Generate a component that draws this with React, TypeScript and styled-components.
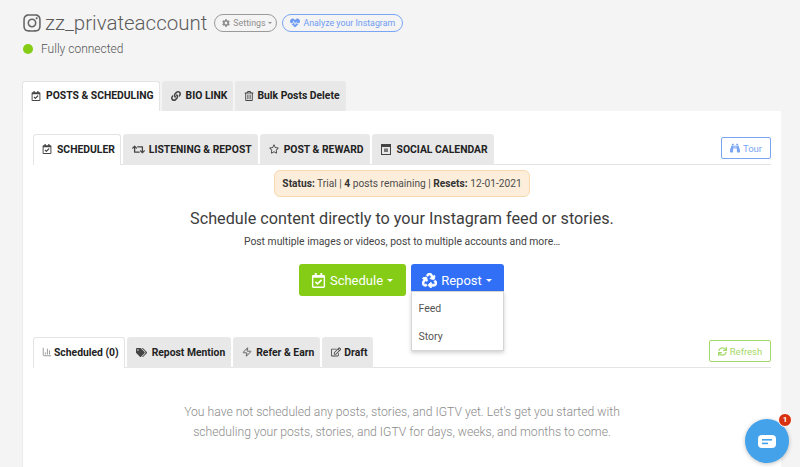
import React from "react";
import styled, { createGlobalStyle } from "styled-components";
import { ChartColumn } from "lucide-react";
import {
  FaBinoculars,
  FaCog,
  FaHeartbeat,
  FaInstagram,
  FaLink,
  FaRecycle,
  FaRegCalendarCheck,
  FaRegEdit,
  FaRegStar,
  FaRegTrashAlt,
  FaRetweet,
  FaSync,
  FaTags,
} from "react-icons/fa";
import { LuZap } from "react-icons/lu";

const GlobalStyle = createGlobalStyle`
  html, body {
    margin: 0;
    height: 467px;
    overflow: hidden;
    background: #f4f4f4;
    font-family: Roboto, "Liberation Sans", sans-serif;
  }
`;

const Page = styled.div`
  height: 467px;
  padding: 11px 19px 0 22px;
  box-sizing: border-box;
  overflow: hidden;
`;

const TitleRow = styled.div`
  display: flex;
  align-items: center;
  height: 24px;
  color: #666;
`;

const Username = styled.span`
  font-size: 20.5px;
  font-weight: 300;
  margin-left: 3px;
  color: #5c5c5c;
`;

const Pill = styled.span<{ $blue?: boolean }>`
  display: inline-flex;
  align-items: center;
  gap: 3px;
  height: 16px;
  padding: ${(p) => (p.$blue ? "0 7px" : "0 4px 0 7px")};
  margin-left: ${(p) => (p.$blue ? "5px" : "7px")};
  border: 1px solid ${(p) => (p.$blue ? "#7aa5f5" : "#9a9a9a")};
  border-radius: 9px;
  font-size: 8.8px;
  color: ${(p) => (p.$blue ? "#6f9cf3" : "#8f8f8f")};
`;

const Caret = styled.span<{ $size?: number }>`
  display: inline-block;
  border-top: ${(p) => p.$size ?? 3}px solid currentColor;
  border-left: ${(p) => p.$size ?? 3}px solid transparent;
  border-right: ${(p) => p.$size ?? 3}px solid transparent;
`;

const StatusRow = styled.div`
  display: flex;
  align-items: center;
  gap: 8px;
  margin: 3px 0 0 1px;
  height: 22px;
  font-size: 12px;
  font-weight: 300;
  color: #555;
`;

const Dot = styled.span`
  width: 10px;
  height: 10px;
  border-radius: 50%;
  background: #84cc16;
`;

const OuterTabs = styled.div`
  display: flex;
  gap: 2px;
  margin-top: 21px;
  height: 30px;
`;

const Tab = styled.div<{ $active?: boolean; $gap?: number; $tall?: boolean }>`
  display: flex;
  align-items: center;
  gap: ${(p) => p.$gap ?? 5}px;
  height: ${(p) => (p.$tall ? 31 : 30)}px;
  padding: 0 5px 2px 8px;
  box-sizing: border-box;
  border: 1px solid ${(p) => (p.$active ? "#e4e4e4" : "#e9e9e9")};
  border-bottom: none;
  border-radius: 3px 3px 0 0;
  background: ${(p) => (p.$active ? "#fff" : "#e8e8e8")};
  font-size: 10.35px;
  font-weight: 700;
  color: #222;
  white-space: nowrap;
  svg {
    font-size: 10px;
    color: #444;
    flex: none;
  }
`;

const Panel = styled.div`
  background: #fff;
  padding: 23px 10px 0 10px;
  height: 400px;
  width: 759px;
  box-sizing: border-box;
  border-left: 1px solid #ececec;
`;

const SubHead = styled.div`
  display: flex;
  align-items: flex-end;
  justify-content: space-between;
  box-sizing: border-box;
  border-bottom: 1px solid #e4e4e4;
  height: 31px;
`;

const InnerTabs = styled.div`
  display: flex;
  gap: 2px;
  margin-bottom: -1px;
`;

const GhostButton = styled.div<{ $color: string; $w: number }>`
  display: flex;
  align-items: center;
  justify-content: center;
  gap: 3px;
  width: ${(p) => p.$w}px;
  height: 22px;
  margin-bottom: 5px;
  box-sizing: border-box;
  border: 1px solid ${(p) => p.$color};
  border-radius: 2px;
  font-size: 9.5px;
  color: ${(p) => p.$color};
`;

const Notice = styled.div`
  width: max-content;
  margin: 5px auto 0;
  height: 27px;
  padding: 0 7px;
  box-sizing: border-box;
  display: flex;
  align-items: center;
  white-space: pre;
  background: #fdeedb;
  border: 1px solid #f6d9ae;
  border-radius: 6px;
  font-size: 10.2px;
  color: #4c4c4c;
  b {
    font-weight: 700;
    color: #333;
  }
`;

const Headline = styled.h2`
  margin: 12px 0 0;
  text-align: center;
  font-size: 16.2px;
  line-height: 20px;
  font-weight: 400;
  color: #3d3d3d;
`;

const Sub = styled.p`
  margin: 6px 0 0;
  text-align: center;
  font-size: 10.35px;
  line-height: 14px;
  color: #444;
`;

const Actions = styled.div`
  display: flex;
  justify-content: center;
  gap: 5px;
  margin-top: 15px;
  padding-right: 2px;
  height: 32px;
`;

const ActionWrap = styled.div`
  position: relative;
`;

const ActionButton = styled.div<{ $bg: string; $w: number }>`
  display: flex;
  align-items: center;
  justify-content: center;
  gap: 4px;
  width: ${(p) => p.$w}px;
  height: 32px;
  background: ${(p) => p.$bg};
  border-radius: 3px;
  color: #fff;
  font-size: 13px;
  svg {
    font-size: 15px;
  }
`;

const Menu = styled.div`
  position: absolute;
  top: 27px;
  left: 0;
  width: 93px;
  height: 60px;
  box-sizing: border-box;
  padding-top: 3px;
  background: #fff;
  border: 1px solid #d5d5d5;
  box-shadow: 0 2px 4px rgba(0, 0, 0, 0.18);
  z-index: 2;
`;

const MenuItem = styled.div`
  height: 28px;
  line-height: 28px;
  padding-left: 7px;
  font-size: 10.5px;
  color: #555;
`;

const LowerHead = styled(SubHead)`
  margin-top: 41px;
`;

const Empty = styled.p`
  margin: 34px auto 0;
  width: 480px;
  text-align: center;
  font-size: 12.2px;
  line-height: 20px;
  font-weight: 300;
  color: #8b8b8b;
`;

const ChatBubble = styled.div`
  position: absolute;
  left: 745px;
  top: 419px;
  width: 44px;
  height: 44px;
  border-radius: 50%;
  background: #44a2ea;
  display: flex;
  align-items: center;
  justify-content: center;
  box-shadow: 0 1px 4px rgba(0, 0, 0, 0.25);
`;

const Badge = styled.span`
  position: absolute;
  top: -6px;
  right: -3px;
  width: 12px;
  height: 12px;
  border-radius: 50%;
  border: 1px solid #fff;
  background: #d9300f;
  color: #fff;
  font-size: 8px;
  font-weight: 700;
  line-height: 12px;
  text-align: center;
`;

const CalendarBox = () => (
  <svg width="10" height="11" viewBox="0 0 10 11" fill="none" stroke="#444">
    <rect x="0.5" y="0.5" width="9" height="10" />
    <rect x="0.5" y="0.5" width="9" height="2" fill="#444" />
    <rect x="3" y="4.5" width="4" height="3.5" fill="#777" stroke="none" />
  </svg>
);

export default function App() {
  return (
    <Page>
      <GlobalStyle />
      <TitleRow>
        <FaInstagram size={20} />
        <Username>zz_privateaccount</Username>
        <Pill>
          <FaCog size={8} /> Settings <Caret $size={2.5} />
        </Pill>
        <Pill $blue>
          <FaHeartbeat size={10} /> Analyze your Instagram
        </Pill>
      </TitleRow>
      <StatusRow>
        <Dot /> Fully connected
      </StatusRow>

      <OuterTabs>
        <Tab $active>
          <FaRegCalendarCheck /> POSTS &amp; SCHEDULING
        </Tab>
        <Tab>
          <FaLink /> BIO LINK
        </Tab>
        <Tab $gap={3}>
          <FaRegTrashAlt /> Bulk Posts Delete
        </Tab>
      </OuterTabs>

      <Panel>
        <SubHead>
          <InnerTabs>
            <Tab $active $tall>
              <FaRegCalendarCheck /> SCHEDULER
            </Tab>
            <Tab $tall $gap={4}>
              <FaRetweet size={13} /> LISTENING &amp; REPOST
            </Tab>
            <Tab $tall>
              <FaRegStar /> POST &amp; REWARD
            </Tab>
            <Tab $tall $gap={6}>
              <CalendarBox /> SOCIAL CALENDAR
            </Tab>
          </InnerTabs>
          <GhostButton $color="#7aa5f5" $w={50}>
            <FaBinoculars size={10} /> Tour
          </GhostButton>
        </SubHead>

        <Notice>
          <b>Status:</b> Trial | <b>4</b> posts remaining | <b>Resets:</b> 12-01-2021
        </Notice>

        <Headline>Schedule content directly to your Instagram feed or stories.</Headline>
        <Sub>Post multiple images or videos, post to multiple accounts and more…</Sub>

        <Actions>
          <ActionButton $bg="#84cc16" $w={107}>
            <FaRegCalendarCheck /> Schedule <Caret />
          </ActionButton>
          <ActionWrap>
            <ActionButton $bg="#316ff6" $w={93}>
              <FaRecycle stroke="currentColor" strokeWidth={30} /> Repost <Caret />
            </ActionButton>
            <Menu>
              <MenuItem>Feed</MenuItem>
              <MenuItem>Story</MenuItem>
            </Menu>
          </ActionWrap>
        </Actions>

        <LowerHead>
          <InnerTabs>
            <Tab $active $tall $gap={2}>
              <ChartColumn size={10} color="#888" /> Scheduled (0)
            </Tab>
            <Tab $tall $gap={5}>
              <FaTags size={11} /> Repost Mention
            </Tab>
            <Tab $tall $gap={4}>
              <LuZap /> Refer &amp; Earn
            </Tab>
            <Tab $tall $gap={3}>
              <FaRegEdit /> Draft
            </Tab>
          </InnerTabs>
          <GhostButton $color="#a5d86a" $w={62}>
            <FaSync size={9} /> Refresh
          </GhostButton>
        </LowerHead>

        <Empty>
          You have not scheduled any posts, stories, and IGTV yet. Let's get you started with
          scheduling your posts, stories, and IGTV for days, weeks, and months to come.
        </Empty>
      </Panel>

      <ChatBubble>
        <Badge>1</Badge>
        <svg width="18" height="13" viewBox="0 0 18 13">
          <rect width="18" height="13" rx="4" fill="#fff" />
          <rect x="4" y="4" width="10" height="1.6" fill="#44a2ea" />
          <rect x="4" y="7.6" width="6" height="1.6" fill="#44a2ea" />
        </svg>
      </ChatBubble>
    </Page>
  );
}
